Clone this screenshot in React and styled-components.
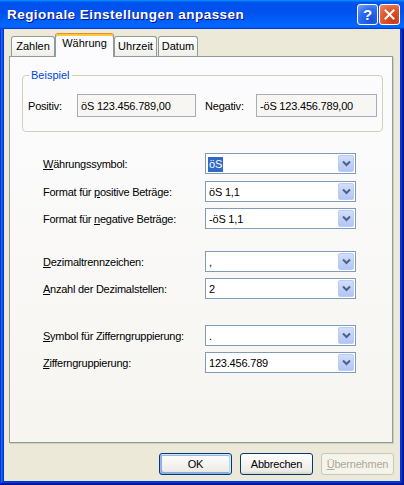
import React from 'react';
import styled, { createGlobalStyle, css } from 'styled-components';

const GlobalStyle = createGlobalStyle`
  html, body { margin: 0; padding: 0; background: #ECE9D8; }
  body {
    width: 404px; height: 485px; overflow: hidden;
    font-family: "Liberation Sans", Arial, sans-serif;
    font-size: 11px; color: #000;
  }
  * { box-sizing: border-box; }
`;

const Window = styled.div`
  width: 404px;
  height: 485px;
  display: flex;
  flex-direction: column;
  background: #0831d9;
  box-shadow: inset -1px -1px #00138c, inset 1px 1px #0831d9,
    inset -2px -2px #001ea0, inset 2px 2px #166aee,
    inset -3px -3px #003bda, inset 3px 3px #0855dd;
  padding: 0 4px 4px 4px;
`;

const TitleBar = styled.div`
  height: 30px;
  margin: 0 -4px;
  padding: 0 4px 0 7px;
  display: flex;
  align-items: center;
  gap: 1px;
  background: linear-gradient(180deg, #0997ff, #0053ee 8%, #0050ee 40%, #06f 88%, #06f 93%, #005bff 95%, #003dd7 96%, #003dd7);
`;

const TitleText = styled.div`
  flex: 1;
  color: #fff;
  font-weight: bold;
  font-size: 13.5px;
  letter-spacing: 0.45px;
  text-shadow: 1px 1px #0f1089;
  padding-bottom: 1px;
`;

const CaptionButton = styled.div`
  width: 21px;
  height: 21px;
  border: 1px solid #fff;
  border-radius: 3px;
  display: flex;
  align-items: center;
  justify-content: center;
  color: #fff;
  font-weight: bold;
  font-size: 15px;
  ${(p) =>
    p.$close
      ? css`
          background: radial-gradient(circle at 70% 80%, #c73a14 0%, #e0582e 55%, #ef8d6c 100%);
        `
      : css`
          background: radial-gradient(circle at 70% 80%, #1a4fd8 0%, #2b6cf0 55%, #7aa6fb 100%);
        `}
`;

const Client = styled.div`
  flex: 1;
  background: #ece9d8;
  padding: 4px 7px 6px 5px;
  display: flex;
  flex-direction: column;
`;

const TabStrip = styled.div`
  height: 23px;
  padding-left: 2px;
  display: flex;
  align-items: flex-end;
`;

const Tab = styled.div`
  width: ${(p) => p.$w}px;
  height: 20px;
  margin-right: ${(p) => p.$gap || 0}px;
  border: 1px solid #919b9c;
  border-bottom: none;
  border-radius: 3px 3px 0 0;
  background: linear-gradient(180deg, #fff, #fafaf9 26%, #f0f0ea 95%, #ecebe5);
  display: flex;
  align-items: center;
  justify-content: center;
  padding-bottom: 1px;
  ${(p) =>
    p.$active &&
    css`
      height: 24px;
      margin-bottom: -1px;
      position: relative;
      z-index: 1;
      background: #fcfcfe;
      border-top: 1px solid #e68b2c;
      box-shadow: inset 0 2px #ffc73c;
      padding-bottom: 5px;
    `}
`;

const Panel = styled.div`
  height: 387px;
  border: 1px solid #919b9c;
  background: linear-gradient(180deg, #fcfcfe, #f6f5f0);
  box-shadow: 1px 1px #d0d0bf;
  padding: 18px 9px 0 12px;
  display: flex;
  flex-direction: column;
`;

const Group = styled.div`
  position: relative;
  height: 57px;
  border: 1px solid #d0d0bf;
  border-radius: 4px;
  padding: 18px 0 14px 5px;
  display: flex;
  align-items: center;
`;

const GroupTitle = styled.span`
  position: absolute;
  top: -7px;
  left: 6px;
  padding: 0 2px;
  background: #fcfcfe;
  color: #0046d5;
  line-height: 13px;
`;

const ExampleLabel = styled.span`
  width: ${(p) => p.$w}px;
  margin-left: ${(p) => p.$left || 0}px;
  letter-spacing: -0.2px;
`;

const ExampleBox = styled.div`
  width: ${(p) => p.$w}px;
  height: 23px;
  border: 1px solid #a5acb5;
  background: #f7f6f2;
  padding: 0 0 0 3px;
  display: flex;
  align-items: center;
  letter-spacing: -0.2px;
`;

const Fields = styled.div`
  display: flex;
  flex-direction: column;
  padding-left: 21px;
`;

const FieldRow = styled.div`
  display: flex;
  align-items: center;
  height: 21px;
  margin-top: ${(p) => p.$top}px;
`;

const FieldLabel = styled.label`
  width: 162px;
  letter-spacing: -0.25px;
  u { text-decoration-thickness: 1px; text-underline-offset: 1px; }
`;

const Combo = styled.div`
  width: 151px;
  height: 21px;
  border: 1px solid #7f9db9;
  background: #fff;
  display: flex;
  align-items: center;
  padding: 1px 1px 1px 3px;
`;

const ComboValue = styled.span`
  flex: 1;
  letter-spacing: -0.2px;
`;

const Selected = styled.span`
  background: #316ac5;
  color: #fff;
  padding: 1px 1px 2px 1px;
  margin-left: -1px;
`;

const DropButton = styled.div`
  width: 16px;
  height: 17px;
  border: 1px solid #bacbf5;
  border-radius: 2px;
  background: linear-gradient(180deg, #d3defb, #c1d1f8 50%, #b2c5f4);
  display: flex;
  align-items: center;
  justify-content: center;
`;

const ButtonRow = styled.div`
  margin-top: 10px;
  display: flex;
  justify-content: flex-end;
  gap: 8px;
  margin-right: -1px;
`;

const PushButton = styled.button`
  width: 73px;
  height: 22px;
  font-family: inherit;
  font-size: 11px;
  letter-spacing: -0.2px;
  color: #000;
  border: 1px solid #003c74;
  border-radius: 3px;
  background: linear-gradient(180deg, #fff, #ecebe6 86%, #d6d0c5);
  padding: 0;
  ${(p) =>
    p.$default &&
    css`
      box-shadow: inset -1px 1px #cee7ff, inset 1px 2px #98b8ea,
        inset -2px 2px #bcd4f6, inset 1px -1px #89ade4, inset 2px -2px #89ade4;
    `}
  &:disabled {
    color: #aca899;
    border-color: #c9c7ba;
    background: #f5f4ea;
  }
`;

function Chevron() {
  return (
    <svg width="9" height="7" viewBox="0 0 9 7">
      <polyline points="1,1.5 4.5,5 8,1.5" fill="none" stroke="#4d6185" strokeWidth="2" />
    </svg>
  );
}

function CloseGlyph() {
  return (
    <svg width="11" height="11" viewBox="0 0 11 11">
      <path d="M1.5 1.5 L9.5 9.5 M9.5 1.5 L1.5 9.5" stroke="#fff" strokeWidth="2" strokeLinecap="square" />
    </svg>
  );
}

function ComboBox({ children }) {
  return (
    <Combo>
      <ComboValue>{children}</ComboValue>
      <DropButton>
        <Chevron />
      </DropButton>
    </Combo>
  );
}

const tabs = [
  { label: 'Zahlen', w: 44 },
  { label: 'Währung', w: 59, active: true },
  { label: 'Uhrzeit', w: 43, gap: 1 },
  { label: 'Datum', w: 40 },
];

const fields = [
  { key: 'ws', label: <><u>W</u>ährungssymbol:</>, value: <Selected>öS</Selected>, top: 21 },
  { key: 'pos', label: <>Format für <u>p</u>ositive Beträge:</>, value: 'öS 1,1', top: 7 },
  { key: 'neg', label: <>Format für <u>n</u>egative Beträge:</>, value: '-öS 1,1', top: 6 },
  { key: 'dez', label: <><u>D</u>ezimaltrennzeichen:</>, value: ',', top: 22 },
  { key: 'anz', label: <><u>A</u>nzahl der Dezimalstellen:</>, value: '2', top: 6 },
  { key: 'sym', label: <><u>S</u>ymbol für Zifferngruppierung:</>, value: '.', top: 26 },
  { key: 'zif', label: <><u>Z</u>ifferngruppierung:</>, value: '123.456.789', top: 6 },
];

export default function App() {
  return (
    <>
      <GlobalStyle />
      <Window>
        <TitleBar>
          <TitleText>Regionale Einstellungen anpassen</TitleText>
          <CaptionButton>?</CaptionButton>
          <CaptionButton $close>
            <CloseGlyph />
          </CaptionButton>
        </TitleBar>
        <Client>
          <TabStrip>
            {tabs.map((t) => (
              <Tab key={t.label} $w={t.w} $gap={t.gap} $active={t.active}>
                {t.label}
              </Tab>
            ))}
          </TabStrip>
          <Panel>
            <Group>
              <GroupTitle>Beispiel</GroupTitle>
              <ExampleLabel $w={49}>Positiv:</ExampleLabel>
              <ExampleBox $w={119}>öS 123.456.789,00</ExampleBox>
              <ExampleLabel $w={51} $left={9}>Negativ:</ExampleLabel>
              <ExampleBox $w={121}>-öS 123.456.789,00</ExampleBox>
            </Group>
            <Fields>
              {fields.map((f) => (
                <FieldRow key={f.key} $top={f.top}>
                  <FieldLabel>{f.label}</FieldLabel>
                  <ComboBox>{f.value}</ComboBox>
                </FieldRow>
              ))}
            </Fields>
          </Panel>
          <ButtonRow>
            <PushButton $default>OK</PushButton>
            <PushButton>Abbrechen</PushButton>
            <PushButton disabled>
              <u>Ü</u>bernehmen
            </PushButton>
          </ButtonRow>
        </Client>
      </Window>
    </>
  );
}
